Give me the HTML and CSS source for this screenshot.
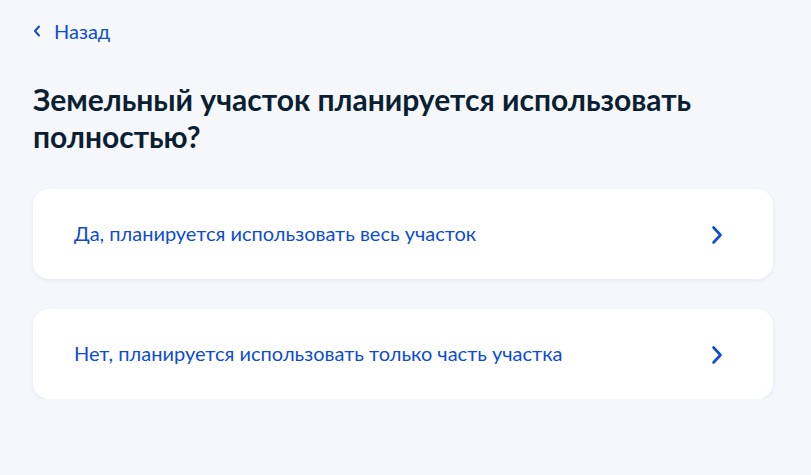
FILE: index.html
```html
<!DOCTYPE html>
<html lang="ru">
<head>
    <meta charset="UTF-8">
    <title>Земельный участок</title>
    <link rel="stylesheet" href="styles.css">
</head>
<body>

<div class="page">
    <a class="back" href="#">
        <svg class="back-icon" width="8" height="12" viewBox="0 0 8 12"><path d="M6 1.5L2 6l4 4.5" fill="none" stroke="#0d4cd3" stroke-width="2" stroke-linecap="round" stroke-linejoin="round"/></svg>
        Назад
    </a>

    <h1 class="title">Земельный участок планируется использовать полностью?</h1>

    <div class="options">
        <a class="option" href="#">
            <span class="option-text">Да, планируется использовать весь участок</span>
            <svg class="option-arrow" width="12" height="20" viewBox="0 0 12 20"><path d="M2.5 2.5L9.5 10l-7 7.5" fill="none" stroke="#0d4cd3" stroke-width="2.6" stroke-linecap="round" stroke-linejoin="round"/></svg>
        </a>
        <a class="option" href="#">
            <span class="option-text">Нет, планируется использовать только часть участка</span>
            <svg class="option-arrow" width="12" height="20" viewBox="0 0 12 20"><path d="M2.5 2.5L9.5 10l-7 7.5" fill="none" stroke="#0d4cd3" stroke-width="2.6" stroke-linecap="round" stroke-linejoin="round"/></svg>
        </a>
    </div>
</div>

</body>
</html>
```

FILE: styles.css
```css
body {
    margin: 0;
    background-color: #f5f7fb;
    font-family: Lato, "Noto Sans", Arial, sans-serif;
    color: #0b1f33;
}
.page {
    width: 740px;
    padding: 19px 0 0 33px;
}
.back {
    display: inline-flex;
    align-items: center;
    gap: 13px;
    color: #0d4cd3;
    text-decoration: none;
    font-size: 20px;
    line-height: 24px;
}
.title {
    margin: 38px 0 34px;
    font-size: 30px;
    line-height: 37px;
    font-weight: 700;
    max-width: 700px;
}
.options {
    display: flex;
    flex-direction: column;
    gap: 30px;
}
.option {
    display: flex;
    align-items: center;
    justify-content: space-between;
    height: 90px;
    padding: 0 50px 0 41px;
    background: #fff;
    border-radius: 16px;
    box-shadow: 0 1px 4px rgba(30, 70, 150, 0.08);
    text-decoration: none;
    color: #0d4cd3;
    font-size: 20px;
}
.option-text {
    margin-top: -2px;
}
.option-arrow {
    margin-top: 2px;
}
```
